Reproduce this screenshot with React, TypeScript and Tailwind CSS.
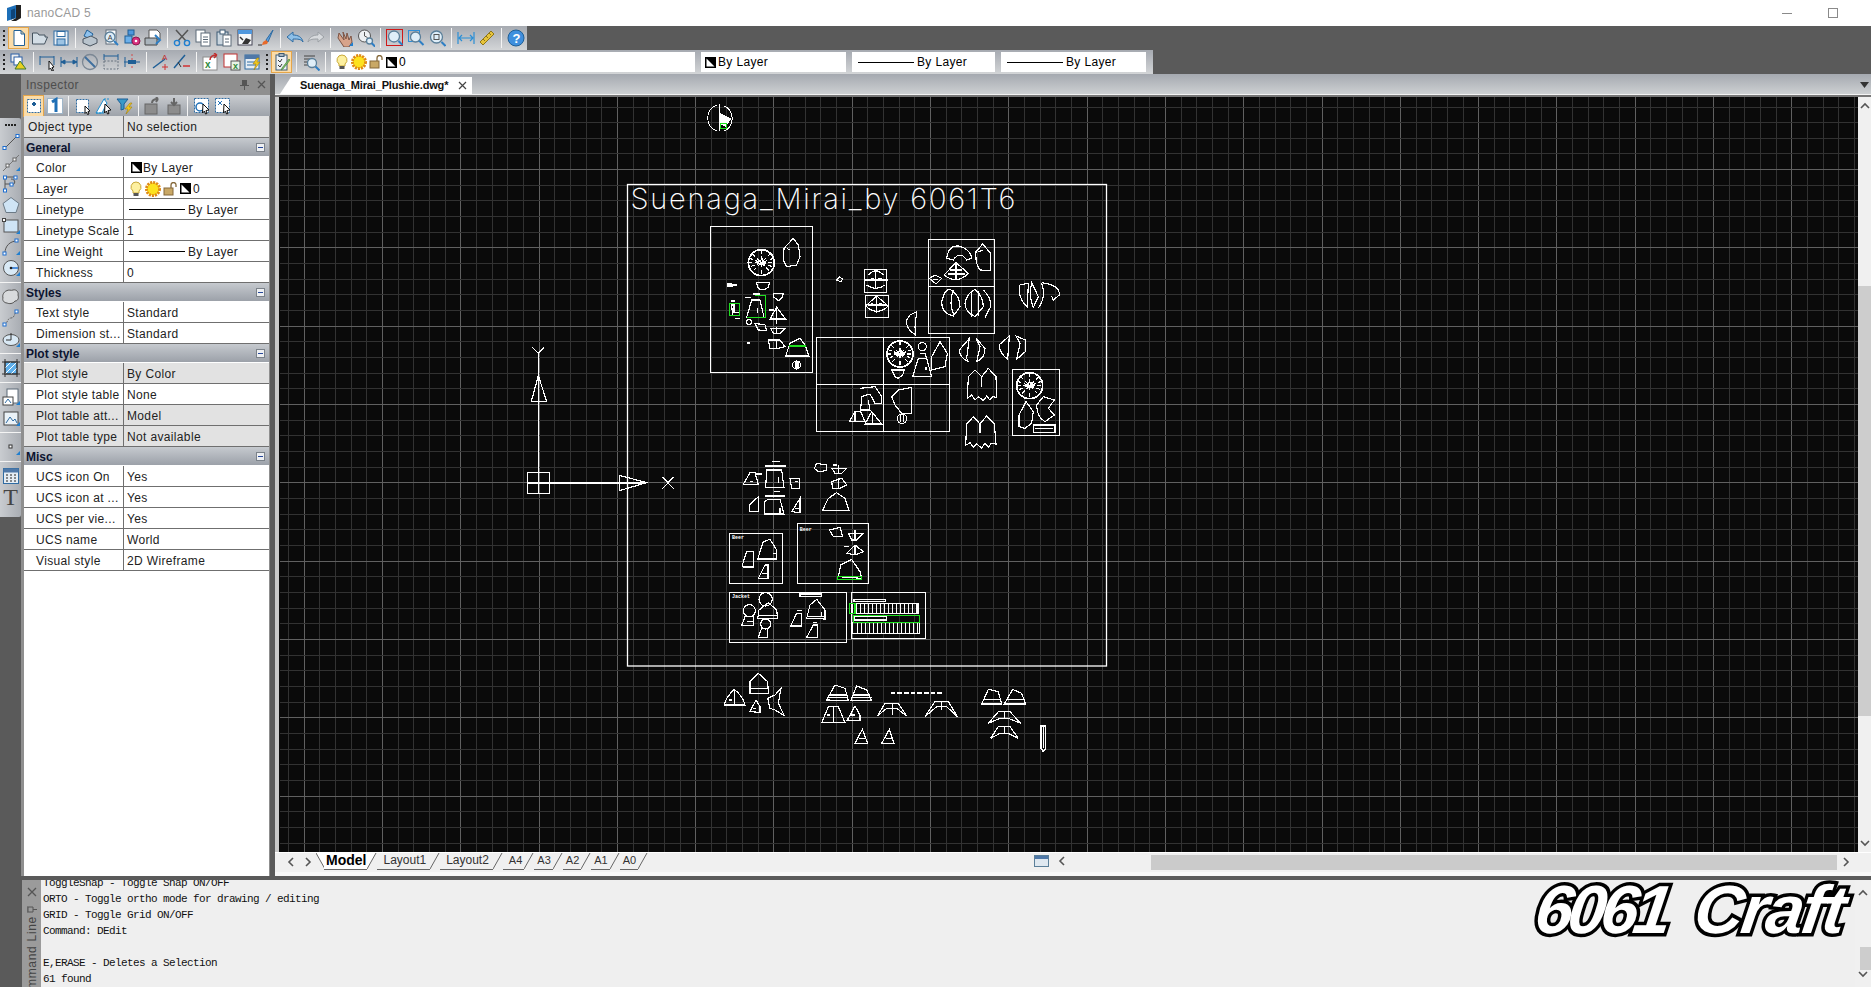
import React from "react";

const uiFont = "font-['Liberation_Sans',sans-serif]";

const Mag = ({ x = 8, y = 8, r = 5, c = "#2f7fc4" }: { x?: number; y?: number; r?: number; c?: string }) => (
  <g>
    <circle cx={x} cy={y} r={r} fill="#dfeef8" stroke="#5b7f99" strokeWidth="1.3" />
    <path d={`M${x + r - 1} ${y + r - 1} l4 4`} stroke={c} strokeWidth="2" />
  </g>
);

const Page = ({ x = 3, y = 2, w = 10, h = 13 }: { x?: number; y?: number; w?: number; h?: number }) => (
  <rect x={x} y={y} width={w} height={h} fill="#fff" stroke="#5d6b78" />
);

const icons: Record<string, React.ReactNode> = {
  new: <path d="M4 1.5h7l3.5 3.5v11.5H4z M11 1.5v3.5h3.5" fill="#fff" stroke="#1f5f96" />,
  open: <path d="M1.5 15V4h5l1.5 2h6v2h2.5l-3 7z" fill="#d3dde5" stroke="#44525e" />,
  save: (
    <g>
      <rect x="2" y="2" width="14" height="14" fill="#e8eef4" stroke="#2f6ca3" />
      <rect x="5" y="2.5" width="8" height="5" fill="#fff" stroke="#2f6ca3" />
      <rect x="5" y="10" width="8" height="6" fill="#9cc3e3" stroke="#2f6ca3" />
    </g>
  ),
  print: (
    <g>
      <path d="M6 1l6 4-3 5-6-3z" fill="#8fc2ee" stroke="#1f5f96" />
      <path d="M2 10l8-3 6 3v4l-7 3-7-3z" fill="#b9c4cd" stroke="#4a5560" />
    </g>
  ),
  preview: (
    <g>
      <Page x={4} y={1} w={10} h={14} />
      <Mag x={8} y={8} r={5} />
      <text x="5.8" y="11" fontSize="7" fill="#333">A</text>
    </g>
  ),
  publish: (
    <g>
      <rect x="5" y="1" width="6" height="5" fill="#4f97dd" stroke="#1f5f96" />
      <rect x="2" y="7" width="7" height="7" fill="#6cb0ea" stroke="#1f5f96" />
      <circle cx="13" cy="12" r="4" fill="#d8307e" stroke="#8d1a4e" />
      <circle cx="13" cy="12" r="1.3" fill="#fff" />
    </g>
  ),
  plot: (
    <g>
      <path d="M5 1h8l3 3v6H5z" fill="#fff" stroke="#555" />
      <path d="M1 9h12v7H1z" fill="#aab4bc" stroke="#444" />
      <path d="M11 6l5 5-4 4" fill="none" stroke="#2f7fc4" strokeWidth="2" />
    </g>
  ),
  cut: (
    <g fill="none">
      <path d="M3 1l10 11M15 1L5 12" stroke="#555" strokeWidth="1.5" />
      <circle cx="4" cy="14" r="2.6" stroke="#1f7fd0" strokeWidth="1.4" />
      <circle cx="14" cy="14" r="2.6" stroke="#1f7fd0" strokeWidth="1.4" />
    </g>
  ),
  copy: (
    <g>
      <Page x={2} y={1} w={9} h={12} />
      <Page x={7} y={4} w={9} h={13} />
      <path d="M9 8h5M9 10.500h5M9 13h5" stroke="#5d6b78" />
    </g>
  ),
  paste: (
    <g>
      <rect x="2" y="3" width="11" height="13" fill="#cbd6df" stroke="#3c5a74" />
      <rect x="5" y="1" width="5" height="4" fill="#fff" stroke="#3c5a74" />
      <Page x={8} y={6} w={8} h={11} />
      <path d="M10 10h4M10 13h4" stroke="#5d6b78" />
    </g>
  ),
  match: (
    <g>
      <rect x="2" y="1" width="14" height="15" fill="#f4f6f8" stroke="#445" />
      <rect x="2" y="1" width="14" height="4" fill="#4f97dd" />
      <path d="M6 15l4-6 5 2-3 4z" fill="#333" />
      <path d="M4 8l3 3" stroke="#333" strokeWidth="1.5" />
    </g>
  ),
  brush: (
    <g>
      <path d="M16 1L9 11l2 2z" fill="#5c9fe0" stroke="#2f6ca3" />
      <path d="M9 11l-3 2-1 3 5-1 1-2z" fill="#e86a2a" />
      <path d="M1 16h4" stroke="#333" />
    </g>
  ),
  undo: <path d="M1 8l6-5v3c5 0 9 2 10 7-2-3-5-3-10-3v3z" fill="#8ec0e8" stroke="#2f6ca3" />,
  redo: <path d="M17 8l-6-5v3C6 6 2 8 1 13c2-3 5-3 10-3v3z" fill="#d7dadd" stroke="#9ba0a5" />,
  hand: (
    <g>
      <path d="M3 4l5 7-1-8 3 7 1-6 2 7 2-4 1 6-3 5H8L2 9z" fill="#d7a38a" stroke="#7d5444" />
      <path d="M13 17l4-4v4z" fill="#1f7fd0" />
    </g>
  ),
  clockZoom: (
    <g>
      <circle cx="7.500" cy="7" r="6" fill="#eef1f3" stroke="#555" />
      <path d="M7.500 3v4l3 1.500" fill="none" stroke="#555" />
      <Mag x={12.500} y={12} r={3} />
    </g>
  ),
  zoomWin: (
    <g>
      <rect x=".5" y=".5" width="16" height="16" fill="none" stroke="#d01818" />
      <Mag x={8} y={7.500} r={5.500} />
    </g>
  ),
  zoomPrev: (
    <g>
      <rect x="1.500" y="1.500" width="11" height="11" fill="none" stroke="#2f8fd8" />
      <Mag x={8.500} y={8} r={5} />
    </g>
  ),
  zoomAll: (
    <g>
      <Mag x={8.500} y={8} r={6} />
      <rect x="6" y="5.500" width="5" height="5" fill="none" stroke="#555" />
    </g>
  ),
  dist: (
    <g stroke="#2b8fd6" fill="none" strokeWidth="1.200">
      <path d="M1 3v12M17 3v12M2 9h14M2 9l3-3M2 9l3 3M16 9l-3-3M16 9l-3 3" />
    </g>
  ),
  ruler: (
    <g>
      <path d="M2 13L13 2l3 3L5 16z" fill="#e6c33b" stroke="#8e7618" />
      <path d="M5 10l2 2M8 7l2 2M11 4l2 2" stroke="#8e7618" />
    </g>
  ),
  help: (
    <g>
      <circle cx="9" cy="9" r="8" fill="#3f8fde" stroke="#1f5f96" />
      <text x="5.500" y="13.500" fontSize="13" fontWeight="700" fill="#fff">?</text>
    </g>
  ),
  layers: (
    <g>
      <rect x="1" y="1" width="8" height="8" fill="#eee" stroke="#2a5fa5" />
      <rect x="4" y="4" width="8" height="8" fill="#fff" stroke="#2a5fa5" />
      <path d="M10 8l6 8H5z" fill="#e8d020" stroke="#3c7a30" />
    </g>
  ),
  dimPick: (
    <g fill="none" stroke="#1f5f96">
      <path d="M1 3v9M15 3v9M1 4h14" />
      <path d="M10 8l5 6-2 .5 1.500 3-1.500.5-1.500-3-1.500 1.500z" fill="#fff" stroke="#111" />
    </g>
  ),
  dimLine: <path d="M1 4v10M17 4v10M1 9h16M1 9l4-2v4zM17 9l-4-2v4z" fill="#1f5f96" stroke="#1f5f96" />,
  noSym: (
    <g fill="none" stroke="#7b8794" strokeWidth="1.300">
      <circle cx="9" cy="9" r="7.500" />
      <path d="M4 4l10 10" stroke="#3f6f9f" strokeWidth="2" />
    </g>
  ),
  dimDash: (
    <g fill="none" stroke="#6a7580">
      <path d="M2 1v6M16 1v6M2 3h14" stroke="#1f5f96" />
      <rect x="2" y="8" width="14" height="8" strokeDasharray="2 1.500" />
    </g>
  ),
  dimMid: (
    <g>
      <path d="M9 1v16" stroke="#d24b4b" strokeDasharray="2 2" />
      <path d="M1 9h16" stroke="#1f5f96" />
      <path d="M2 4v10" stroke="#1f5f96" />
      <path d="M5 7h8v4H5z" fill="#1f5f96" />
    </g>
  ),
  addA: (
    <g fill="none">
      <path d="M1 15L13 6" stroke="#1f5f96" strokeWidth="1.500" />
      <text x="10" y="7" fontSize="8" fill="#c03030" stroke="none">A</text>
      <path d="M10 14h6M13 11v6" stroke="#d03030" />
    </g>
  ),
  subA: (
    <g fill="none">
      <path d="M1 15L12 2" stroke="#1f5f96" strokeWidth="1.500" />
      <path d="M8 14L5 9" stroke="#333" />
      <path d="M10 13h7" stroke="#d03030" strokeWidth="1.500" />
    </g>
  ),
  xlsOut: (
    <g>
      <rect x="1" y="4" width="14" height="13" fill="#fff" stroke="#8c8c8c" />
      <text x="3" y="15" fontSize="10" fontWeight="700" fill="#2f8a3a">x</text>
      <path d="M8 7c0-4 3-5 7-5M15 2l-3-2M15 2l-3 3" fill="none" stroke="#c03030" strokeWidth="1.500" />
    </g>
  ),
  xlsIn: (
    <g>
      <rect x="1" y="1" width="13" height="13" fill="#fff" stroke="#c03030" />
      <rect x="8" y="8" width="9" height="9" fill="#e8f3e6" stroke="#555" />
      <text x="10" y="16" fontSize="9" fontWeight="700" fill="#2f8a3a">x</text>
    </g>
  ),
  tableBolt: (
    <g>
      <rect x="1" y="2" width="14" height="14" fill="#e7eef5" stroke="#2f6ca3" />
      <rect x="1" y="2" width="14" height="4" fill="#4f78a8" />
      <path d="M3 9h9M3 12h9" stroke="#2f6ca3" />
      <path d="M13 5l-4 6h3l-2 6 6-8h-3l2-4z" fill="#f2c81e" stroke="#a07f10" strokeWidth=".6" />
    </g>
  ),
  clip: (
    <g>
      <rect x="3" y="2" width="11" height="15" fill="#eef2f5" stroke="#3c5a74" />
      <rect x="6" y="0.500" width="5" height="3" fill="#aab4bc" stroke="#3c5a74" />
      <path d="M5 7l2 2 2-3M5 12l2 2 2-3" fill="none" stroke="#333" />
      <path d="M16 6l-7 9-1 2 2-1 7-9z" fill="#7cc06a" stroke="#3c7a30" strokeWidth=".6" />
    </g>
  ),
  findBolt: (
    <g>
      <path d="M2 3h11M2 6h9M2 9h6M2 12h4" stroke="#444" />
      <Mag x={10} y={10} r={4.500} />
    </g>
  ),
  select: (
    <g>
      <rect x="2.500" y="2.500" width="13" height="13" fill="#fff" stroke="#2f6ca3" strokeDasharray="2 1" />
      <path d="M7 7h4M9 5v4" stroke="#1f5f96" strokeWidth="2" />
    </g>
  ),
  one: (
    <g>
      <rect x="1.500" y="1.500" width="15" height="15" fill="#fff" stroke="#9fb6c9" />
      <path d="M6 5l4-2.500V15" fill="none" stroke="#1f6fb5" strokeWidth="3" />
    </g>
  ),
  quick: (
    <g>
      <rect x="2.500" y="2.500" width="12" height="13" fill="#fff" stroke="#2f6ca3" strokeDasharray="2 1" />
      <path d="M11 9l5 5-2 .5 1 2.500-1.500.5-1-2.500-1.500 1.500z" fill="#fff" stroke="#111" />
    </g>
  ),
  pick: (
    <g>
      <path d="M1 16L9 2l3 4-5 10z" fill="#fff" stroke="#1f8fd0" />
      <path d="M9 2h6M1 16h8" stroke="#1f8fd0" strokeDasharray="2 1" />
      <path d="M10 7l6 6-3 .5 1 3-1.500.5-1-3-2 2z" fill="#fff" stroke="#111" />
    </g>
  ),
  filter: (
    <g>
      <path d="M1 2h11L8 7v5L5 13V7z" fill="#3a9ac9" stroke="#1f5f96" />
      <path d="M14 6l-5 6h3l-2 5 6-7h-3l3-4z" fill="#f2c81e" stroke="#a07f10" strokeWidth=".6" />
    </g>
  ),
  grayOut: (
    <g>
      <rect x="1" y="7" width="12" height="10" fill="#8d8d8d" stroke="#666" />
      <path d="M8 6c0-3 3-4 6-4M14 2l-2-2M14 2l-2 3" fill="none" stroke="#666" strokeWidth="2" />
    </g>
  ),
  grayIn: (
    <g>
      <rect x="3" y="8" width="12" height="9" fill="#8d8d8d" stroke="#666" />
      <path d="M9 1v7M6 5l3 3 3-3" fill="none" stroke="#666" strokeWidth="2" />
    </g>
  ),
  selCirc: (
    <g>
      <rect x="1.500" y="1.500" width="14" height="14" fill="#fff" stroke="#2f6ca3" strokeDasharray="2 1" />
      <circle cx="7" cy="10" r="4" fill="none" stroke="#1f6fb5" strokeWidth="1.500" />
      <path d="M10 7l6 6-3 .5 1 3-1.500.5-1-3-2 2z" fill="#fff" stroke="#111" />
    </g>
  ),
  selX: (
    <g>
      <rect x="1.500" y="1.500" width="14" height="14" fill="#fff" stroke="#2f6ca3" strokeDasharray="2 1" />
      <path d="M4 4l4 4M8 4L4 8" stroke="#1f6fb5" />
      <path d="M10 7l6 6-3 .5 1 3-1.500.5-1-3-2 2z" fill="#fff" stroke="#111" />
    </g>
  ),
  line: (
    <g>
      <path d="M3 15L15 3" stroke="#555" />
      <rect x="1" y="13.500" width="3" height="3" fill="#fff" stroke="#1f6fd0" />
      <rect x="14" y="1.500" width="3" height="3" fill="#fff" stroke="#1f6fd0" />
    </g>
  ),
  xline: (
    <g>
      <path d="M1 17L17 1" stroke="#777" />
      <rect x="4" y="10" width="3" height="3" fill="#fff" stroke="#666" />
      <rect x="11" y="4" width="3" height="3" fill="#fff" stroke="#666" />
      <path d="M14 17l4-4v4z" fill="#1f7fd0" />
    </g>
  ),
  poly: (
    <g fill="#fff" stroke="#1f6fd0">
      <path d="M3 2h10M3 2v14M3 9h6M9 4c5 0 5 6 0 6" fill="none" stroke="#555" />
      <rect x="1.500" y="1" width="3" height="3" />
      <rect x="12" y="1" width="3" height="3" />
      <rect x="1.500" y="14" width="3" height="3" />
      <rect x="8" y="8" width="3" height="3" />
    </g>
  ),
  pentagon: <path d="M9 1.500l8 6-3 9H4l-3-9z" fill="#cfe4f5" stroke="#6c7a86" />,
  rect: (
    <g>
      <rect x="2" y="3" width="14" height="12" fill="#cfe4f5" stroke="#555" />
      <rect x=".5" y="1.500" width="3" height="3" fill="#fff" stroke="#444" />
      <path d="M14 17l4-4v4z" fill="#1f7fd0" />
    </g>
  ),
  arc: (
    <g>
      <path d="M3 15C3 8 8 3 15 3" fill="none" stroke="#555" />
      <rect x="1" y="14" width="3" height="3" fill="#fff" stroke="#1f6fd0" />
      <rect x="13" y="1" width="3" height="3" fill="#fff" stroke="#1f6fd0" />
      <path d="M14 17l4-4v4z" fill="#1f7fd0" />
    </g>
  ),
  circle: (
    <g>
      <circle cx="9" cy="9" r="7.500" fill="#d9e9f5" stroke="#555" />
      <path d="M9 9h7" stroke="#1f6fd0" strokeWidth="1.500" />
      <circle cx="9" cy="9" r="1.300" fill="#222" />
      <path d="M14 17l4-4v4z" fill="#1f7fd0" />
    </g>
  ),
  cloud: <path d="M4 3c3-2 5 0 7-1 3-1 6 2 5 5 1 3 0 6-3 6-2 3-6 3-8 2-3 0-5-3-4-5C0 7 2 4 4 3z" fill="#d8dadc" stroke="#555" />,
  spline: (
    <g>
      <path d="M2 15c4 0 3-6 7-6s3-5 6-7" fill="none" stroke="#666" strokeDasharray="2 1" />
      <rect x="1" y="14" width="3" height="3" fill="#fff" stroke="#1f6fd0" />
      <rect x="13" y="1" width="3" height="3" fill="#fff" stroke="#1f6fd0" />
    </g>
  ),
  ellipse: (
    <g>
      <ellipse cx="9" cy="10" rx="8" ry="5.500" fill="#d9e9f5" stroke="#555" />
      <path d="M9 10h-5M9 3v7" stroke="#333" />
      <path d="M14 17l4-4v4z" fill="#1f7fd0" />
    </g>
  ),
  hatch: (
    <g>
      <rect x="3" y="3" width="12" height="12" fill="#5fb0ec" stroke="#333" />
      <path d="M3 9l6-6M3 15L15 3M9 15l6-6" stroke="#fff" />
      <path d="M0 3h18M0 15h18M3 0v18M15 0v18" stroke="#333" />
    </g>
  ),
  block: (
    <g>
      <Page x={5} y={1} w={11} h={14} />
      <rect x="1" y="9" width="10" height="8" fill="#fff" stroke="#444" />
      <path d="M3 15l3-4 3 4" fill="none" stroke="#2f6ca3" />
      <path d="M14 17l4-4v4z" fill="#1f7fd0" />
    </g>
  ),
  image: (
    <g>
      <rect x="2" y="3" width="14" height="13" fill="#eaf2f8" stroke="#444" />
      <path d="M4 14l4-6 3 4 2-2 2 4" fill="none" stroke="#2f6ca3" />
      <path d="M14 17l4-4v4z" fill="#1f7fd0" />
    </g>
  ),
  point: (
    <g>
      <rect x="7" y="7" width="3" height="3" fill="#fff" stroke="#333" />
      <path d="M14 17l4-4v4z" fill="#1f7fd0" />
    </g>
  ),
  table: (
    <g>
      <rect x="1.500" y="1.500" width="15" height="15" fill="#e5edf4" stroke="#2f6ca3" />
      <rect x="1.500" y="1.500" width="15" height="4" fill="#4f78a8" />
      <path d="M4 8h2M8 8h2M12 8h2M4 11h2M8 11h2M12 11h2M4 14h2M8 14h2M12 14h2" stroke="#222" />
    </g>
  ),
};

const Icon = ({ name, size = 18 }: { name: string; size?: number }) => (
  <svg width={size} height={size} viewBox="0 0 18 18" className="shrink-0">
    {icons[name]}
  </svg>
);

const ToolBtn = ({ name, active }: { name: string; active?: boolean }) => (
  <div
    className={`w-[21px] h-[22px] flex items-center justify-center shrink-0 ${
      active ? "bg-[#fbdca8] border border-[#e5a64a]" : ""
    }`}
  >
    <Icon name={name} />
  </div>
);

const Sep = ({ w = "w-[8px]" }: { w?: string }) => (
  <div className={`${w} h-[20px] flex justify-center shrink-0`}>
    <div className="w-[1px] h-full bg-[#f4f4f4]" />
  </div>
);

const Grip = () => (
  <div className="w-[8px] h-[20px] flex flex-col justify-between py-[2px] items-center shrink-0">
    <div className="w-[2px] h-[2px] bg-[#222]" />
    <div className="w-[2px] h-[2px] bg-[#222]" />
    <div className="w-[2px] h-[2px] bg-[#222]" />
    <div className="w-[2px] h-[2px] bg-[#222]" />
  </div>
);

const Swatch = () => (
  <svg width="11" height="11" viewBox="0 0 11 11" className="shrink-0">
    <rect width="11" height="11" fill="#000" />
    <path d="M1.500 1.500L9.500 9.500V1.500z" fill="#fff" transform="rotate(180 5.500 5.500)" />
  </svg>
);

const LayerGlyphs = () => (
  <span className="flex items-center gap-[2px]">
    <svg width="14" height="16" viewBox="0 0 14 16" className="shrink-0">
      <path d="M7 1a5 5 0 0 1 3 9v2H4v-2a5 5 0 0 1 3-9z" fill="#fdf0a0" stroke="#c9a93a" />
      <rect x="4.500" y="12" width="5" height="3" fill="#555" />
    </svg>
    <svg width="16" height="16" viewBox="0 0 16 16" className="shrink-0">
      <circle cx="8" cy="8" r="6.500" fill="#fde21f" stroke="#e08a16" strokeWidth="3" strokeDasharray="2 1" />
      <circle cx="8" cy="8" r="5" fill="#fde21f" />
    </svg>
    <svg width="15" height="14" viewBox="0 0 15 14" className="shrink-0">
      <rect x="1" y="6" width="9" height="7" fill="#c9a866" stroke="#85683a" />
      <path d="M8 6V3a2.500 2.500 0 0 1 5 0v2" fill="none" stroke="#85683a" strokeWidth="1.300" />
    </svg>
    <Swatch />
  </span>
);

const LinePreview = () => <span className="w-[56px] h-[1px] bg-black shrink-0" />;

type Row = { name: string; value: React.ReactNode; gray?: boolean };

const sections: { title: string; rows: Row[] }[] = [
  {
    title: "General",
    rows: [
      { name: "Color", value: <span className="flex items-center gap-[1px] pl-[4px]"><Swatch /><span>By Layer</span></span> },
      { name: "Layer", value: <span className="flex items-center gap-[2px] pl-[2px]"><LayerGlyphs /><span>0</span></span> },
      { name: "Linetype", value: <span className="flex items-center gap-[3px] pl-[2px]"><LinePreview /><span>By Layer</span></span> },
      { name: "Linetype Scale", value: "1" },
      { name: "Line Weight", value: <span className="flex items-center gap-[3px] pl-[2px]"><LinePreview /><span>By Layer</span></span> },
      { name: "Thickness", value: "0" },
    ],
  },
  {
    title: "Styles",
    rows: [
      { name: "Text style", value: "Standard" },
      { name: "Dimension st...", value: "Standard" },
    ],
  },
  {
    title: "Plot style",
    rows: [
      { name: "Plot style", value: "By Color", gray: true },
      { name: "Plot style table", value: "None" },
      { name: "Plot table att...", value: "Model", gray: true },
      { name: "Plot table type", value: "Not available", gray: true },
    ],
  },
  {
    title: "Misc",
    rows: [
      { name: "UCS icon On", value: "Yes" },
      { name: "UCS icon at ...", value: "Yes" },
      { name: "UCS per vie...", value: "Yes" },
      { name: "UCS name", value: "World" },
      { name: "Visual style", value: "2D Wireframe" },
    ],
  },
];

const PropRow = ({ row }: { row: Row }) => (
  <div className={`h-[21px] flex border-b border-[#6f6f6f] text-[12px] tracking-[0.35px] text-[#222] ${row.gray ? "bg-[#e2e2e2]" : "bg-white"}`}>
    <div className="w-[100px] pl-[12px] pt-[1px] border-r border-[#6f6f6f] flex items-center whitespace-nowrap overflow-hidden shrink-0">{row.name}</div>
    <div className="flex-1 pl-[3px] pt-[1px] flex items-center whitespace-nowrap">{row.value}</div>
  </div>
);

const Inspector = () => (
  <div className="w-[249px] flex flex-col shrink-0 bg-[#8f8f8f] border-l-[3px] border-r-[1px] border-[#8f8f8f]">
    <div className="h-[21px] flex items-center justify-between text-[12px] text-[#4d4d4d] tracking-[0.4px] pl-[2px] pr-[3px]">
      <span>Inspector</span>
      <span className="flex items-center gap-[8px] text-[#4a4a4a]">
        <svg width="9" height="11" viewBox="0 0 9 11"><path d="M2 1h5v5h2v1H5v4H4V7H0V6h2z" fill="#555" /></svg>
        <svg width="9" height="9" viewBox="0 0 9 9"><path d="M1 1l7 7M8 1L1 8" stroke="#555" strokeWidth="1.300" /></svg>
      </span>
    </div>
    <div className="h-[21px] flex items-center bg-linear-to-b from-[#c9ccd0] to-[#9ea3aa] -mx-[1px]">
      <ToolBtn name="select" active />
      <ToolBtn name="one" />
      <Sep w="w-[7px]" />
      <ToolBtn name="quick" />
      <ToolBtn name="pick" />
      <ToolBtn name="filter" />
      <Sep w="w-[7px]" />
      <ToolBtn name="grayOut" />
      <ToolBtn name="grayIn" />
      <Sep w="w-[7px]" />
      <ToolBtn name="selCirc" />
      <ToolBtn name="selX" />
    </div>
    <div className="flex-1 bg-white">
      <div className="h-[22px] flex border-b border-[#6f6f6f] bg-[#e2e2e2] text-[12px] tracking-[0.35px] text-[#222]">
        <div className="w-[100px] pl-[4px] pt-[1px] border-r border-[#6f6f6f] flex items-center shrink-0">Object type</div>
        <div className="pl-[3px] pt-[1px] flex items-center">No selection</div>
      </div>
      {sections.map((s) => (
        <div key={s.title}>
          <div className="h-[19px] flex items-center justify-between pl-[2px] pr-[4px] pt-[1px] bg-linear-to-b from-[#c6cacf] to-[#9ca1a9] border-b border-white text-[12px] font-bold text-[#0c1430]">
            <span>{s.title}</span>
            <span className="w-[9px] h-[9px] bg-[#eef0f3] border border-[#7b828a] flex items-center justify-center">
              <span className="w-[5px] h-[1px] bg-[#27489a]" />
            </span>
          </div>
          {s.rows.map((r) => (
            <PropRow key={r.name} row={r} />
          ))}
        </div>
      ))}
    </div>
  </div>
);

const leftTools: (string | null)[] = [
  "line", "xline", "poly", "pentagon", "rect", "arc", "circle", null,
  "cloud", "spline", "ellipse", null, "hatch", null, "block", "image", null, "point", null, "table",
];

const LeftToolbar = () => (
  <div className="w-[21px] h-[399px] mt-[44px] shrink-0 flex flex-col items-center bg-linear-to-r from-[#c9ccd0] to-[#a9adb3] rounded-r-[2px]">
    <div className="flex gap-[1px] h-[13px] items-center shrink-0">
      <div className="w-[2px] h-[2px] bg-[#222]" />
      <div className="w-[2px] h-[2px] bg-[#222]" />
      <div className="w-[2px] h-[2px] bg-[#222]" />
      <div className="w-[2px] h-[2px] bg-[#222]" />
    </div>
    {leftTools.map((t, i) =>
      t ? (
        <div key={i} className="h-[21px] w-full flex items-center justify-center shrink-0">
          <Icon name={t} />
        </div>
      ) : (
        <div key={i} className="h-[1px] w-full bg-[#f4f4f4] my-[3.5px] shrink-0" />
      ),
    )}
    <div className="h-[21px] w-full flex items-center justify-center shrink-0 font-['Liberation_Serif',serif] text-[24px] text-[#444]">T</div>
  </div>
);

const Wheel = ({ x, y, r = 39 }: { x: number; y: number; r?: number }) => {
  const spokes = [0, 45, 90, 135, 20, 160].map((a) => {
    const c = Math.cos((a * Math.PI) / 180) * r;
    const s = Math.sin((a * Math.PI) / 180) * r;
    return `M${x - c} ${y - s}L${x + c} ${y + s}`;
  });
  return (
    <g>
      <circle cx={x} cy={y} r={r} strokeWidth="5" />
      <path d={spokes.join("")} strokeDasharray="12 8" />
      <path d={`M${x - 12} ${y + 4}l8-10 4 14 4-16 4 14 6-8`} strokeWidth="4" />
    </g>
  );
};

const sheetA = [
  "M492 235L520 205L535 225L540 260L530 285L500 290L490 270Z M500 235L510 240",
  "M410 338H448L445 352L435 358L420 358L412 350Z",
  "M395 390H420L432 442H380Z M412 415V430 M375 382H392 M400 372H420",
  "M462 370H490L485 385L475 392L460 380Z",
  "M470 412L497 447H450Z M470 412V462 M448 420H462",
  "M405 460L435 465L440 482L415 480Z",
  "M452 475H495L480 490H460Z M470 470V492",
  "M445 510H480L495 530L475 535L450 535Z M470 510V535",
  "M497 558L510 520L540 505L555 525L567 558Z",
  "M518 585a12 12 0 1 0 24 0a12 12 0 1 0 -24 0 M528 575V595 M534 575V595",
  "M380 456a7 7 0 1 0 14 0a7 7 0 1 0 -14 0",
  "M335 405H342V428H358V437H338Z M332 393H345 M345 445H360",
  "M322 345H352 M322 340H335 M380 519H390 M322 350H340",
  "M650 330L658 320L668 328L662 335Z",
  "M735 330H805 M767 300V355 M740 345Q767 365 795 345 M752 327h10 M775 327h10 M745 315Q767 290 790 315",
  "M737 408L770 378L805 408Q770 440 737 408 M770 378V430 M745 405H800 M752 400h8 M778 400h8",
  "M980 265Q985 225 1015 228Q1050 235 1055 265L1040 270Q1020 240 1000 270Z",
  "M1068 245L1088 222L1112 250V302L1080 300Q1065 280 1068 245Z M1075 245L1090 240",
  "M972 315L1008 278L1045 310Q1010 345 972 315 M1008 278V330 M985 312H1035 M990 300H1025",
  "M928 325L945 315L965 325L948 342Z M938 328H955",
  "M965 395Q975 355 990 358Q1020 375 1020 410L1000 438Q965 430 965 395Z M1000 360Q985 400 1002 436",
  "M1035 400Q1040 370 1065 358Q1090 380 1090 410L1065 440Q1035 425 1035 400Z M1055 362V440 M1075 362V438",
  "M1090 360Q1115 385 1112 410L1095 442",
  "M1200 345Q1190 380 1222 412L1225 340Z M1235 338Q1225 380 1240 412L1255 380Z M1265 338Q1280 380 1255 415 M1265 338Q1320 345 1318 375L1300 390L1295 378",
  "M870 435L890 425L885 470L887 495Q855 475 860 450Z",
  "M895 565H920L935 620H878Z M900 550H915L920 565H895 M895 530a12 12 0 1 0 24 0a12 12 0 1 0 -24 0 M918 590V600",
  "M935 560L960 515L982 550L975 590L935 600Z",
  "M815 600H853L848 615L835 625L825 620Z",
  "M720 655L765 650L785 680V700H765L750 672L725 680L722 720L750 720L745 690",
  "M688 755L705 725L722 725L735 755Z M705 725V755",
  "M735 762L755 725L785 762Z M758 725V762",
  "M815 680L835 660L875 652V730H845L825 705Z",
  "M832 746a14 14 0 1 0 28 0a14 14 0 1 0 -28 0 M842 736V756 M850 736V756",
  "M1018 540L1048 505L1040 565L1045 575Q1020 565 1018 540Z",
  "M1068 505L1095 535Q1095 565 1070 575L1080 530Z",
  "M1137 525L1168 498L1163 568Q1140 550 1137 525Z",
  "M1188 498L1216 510V545L1190 568L1200 520Z",
  "M1045 620L1065 600L1085 620L1105 595L1128 620L1130 682L1118 680L1110 690L1100 678L1090 692L1075 680L1065 690L1055 675L1042 685Z M1085 620V650",
  "M1040 762L1060 740L1080 762L1100 738L1123 762L1128 822L1113 820L1105 832L1095 820L1085 834L1070 822L1060 832L1050 818L1037 826Z M1080 762V790",
  "M1197 735L1218 695L1240 725L1235 760L1215 775L1197 770Z",
  "M1250 705L1270 680L1303 690L1285 715L1303 735L1275 755Q1250 740 1250 705Z",
  "M1240 765H1305V787H1240Z M1245 775H1300",
];

const sheetB = [
  "M200 90H245L252 143H197Z M235 110V130 M195 78H258 M215 65H240",
  "M130 133L150 98H165L175 133Z M150 125H160 M165 102H185",
  "M270 115H298V145H275Z M285 125H295",
  "M148 215V195L175 170V215Z",
  "M193 222V185L205 178H240L252 222Z M195 168H255 M222 155H240 M240 205V220",
  "M275 215L300 175V218Z M285 205H300",
  "M343 85L350 70L380 75L378 92L355 95Z",
  "M396 85H440L425 100H405Z M415 75V100 M400 75H412",
  "M395 125L425 115L440 135L420 145H398Z M415 115V145",
  "M367 212L385 175L410 158L435 175L447 212Z",
  "M173 357L190 305L210 298L230 330V357Z M220 340H230",
  "M126 378L140 335H160V381H130Z",
  "M175 415L195 375H204V415Z M185 400H204",
  "M388 270L420 262L428 290L400 290Z",
  "M445 280H490L470 300H455Z M465 270V300",
  "M440 340L465 315L490 335L465 345Z M465 315V345 M432 320H448",
  "M415 410L422 375L455 358L480 395L485 415Z",
  "M217 478a20 20 0 1 0 -40 0a20 20 0 1 0 40 0 M166 512a18 18 0 1 0 -36 0a18 18 0 1 0 36 0 M212 552a15 15 0 1 0 -30 0a15 15 0 1 0 30 0",
  "M173 535L177 510L205 488L230 510L233 535Z M173 527H233",
  "M125 557L135 530H160V557Z M140 545H160",
  "M175 592L185 565H203V592Z",
  "M272 558L290 520H305V558Z M290 512H305",
  "M320 535L330 495L350 478L375 510V537Z M320 530H378 M365 515V530",
  "M300 462H365V470H300Z",
  "M320 592L340 555H352V592Z M340 548H352",
  "M462 478H557V485H462Z M458 490H654V521H458Z M462 530H560V540H462Z M458 548H659V581H458Z",
  "M73 795Q75 775 103 748Q130 770 135 795Z M103 748V795 M88 780H95",
  "M150 760V725L175 700L203 725L205 760Z M150 745H205",
  "M150 815L168 780L180 800V817Z M160 805H168",
  "M203 775L225 765L243 745L235 790L253 827L225 810L210 805Z",
  "M380 780L405 735L435 745L445 782Z M390 765H440 M382 772H445",
  "M452 782L470 738L500 750L515 782Z M460 765H510 M455 772H515",
  "M365 848L385 800H415L435 848Z M400 800V848 M380 825H390",
  "M442 840L465 798L480 825V842Z M450 825H465",
  "M465 910L487 868L503 910Z M478 895H495",
  "M545 910L568 868L582 910Z M558 895H575",
  "M532 828L555 790H595L620 828L590 805H560Z M578 790V825",
  "M675 830L705 785H745L772 830L740 800H710Z M725 785V810",
  "M845 792L865 748L895 755L905 792Z M850 778H900",
  "M913 792L938 748L965 760L977 792Z M918 778H975",
  "M865 850L895 815H930L962 850L925 835H900Z M913 815V835",
  "M872 895L895 860H930L955 895L925 880H900Z M913 860V880",
  "M1023 858H1037V925L1030 935L1023 925Z M1030 858V925",
];

const stripes = Array.from({ length: 16 }, (_, i) => 470 + i * 12);

const Drawing = () => {
  const xs = Array.from({ length: 102 }, (_, i) => 288 + i * 15.66);
  const ys = Array.from({ length: 50 }, (_, i) => 106.5 + i * 15.66);
  const isMajorX = (i: number) => i % 5 === 1;
  const isMajorY = (i: number) => i % 5 === 4;
  return (
    <svg viewBox="280 97 1578 755" className="absolute inset-0 w-full h-full" fill="none" shapeRendering="crispEdges">
      {xs.map((x, i) => (
        <path key={x} d={`M${Math.round(x) + 0.5} 97V852`} stroke={isMajorX(i) ? "#606060" : "#323232"} />
      ))}
      {ys.map((y, i) => (
        <path key={y} d={`M280 ${Math.round(y) + 0.5}H1858`} stroke={isMajorY(i) ? "#606060" : "#323232"} />
      ))}

      <g stroke="#fff" shapeRendering="auto">
        <rect x="628" y="184.500" width="479" height="481.500" strokeWidth="1.300" />
        <text x="631" y="209" fill="#fff" stroke="none" fontSize="29" fontFamily="Inter, sans-serif" fontWeight="200" textLength="385" lengthAdjust="spacing">Suenaga_Mirai_by 6061T6</text>
      </g>

      <g transform="translate(620.500 170) scale(.33333)" stroke="#fff" strokeWidth="3.500">
        <rect x="271" y="170" width="307" height="437" strokeWidth="4" />
        <path d="M925 208H1124V490H925Z M925 349H1124" strokeWidth="4" />
        <path d="M589 502H989V784H589Z M790 502V784 M589 643H989" strokeWidth="4" />
        <rect x="733" y="298" width="67" height="69" />
        <rect x="736" y="376" width="70" height="66" />
        <rect x="1177" y="598" width="142" height="198" strokeWidth="4" />
        <Wheel x={424} y={278} />
        <Wheel x={840} y={552} />
        <Wheel x={1229} y={647} />
        {sheetA.map((d) => (
          <path key={d} d={d} />
        ))}
        <g stroke="#1fe01f">
          <rect x="328" y="400" width="30" height="37" />
          <path d="M405 376H437V442H382" />
          <path d="M508 528H558" strokeWidth="4" />
        </g>
      </g>

      <g transform="translate(700.500 440) scale(.33333)" stroke="#fff" strokeWidth="3.500">
        <rect x="88" y="280" width="160" height="151" strokeWidth="4" />
        <rect x="292" y="250" width="214" height="181" strokeWidth="4" />
        <rect x="88" y="458" width="352" height="149" strokeWidth="4" />
        <rect x="454" y="458" width="223" height="138" strokeWidth="4" />
        {sheetB.map((d) => (
          <path key={d} d={d} />
        ))}
        <path d={stripes.map((x) => `M${x} 490V521M${x + 3} 548V581`).join("")} />
        <path d="M572 760H728" strokeDasharray="14 6" strokeWidth="5" />
        <g fill="#fff" stroke="none" fontSize="15" fontWeight="700" fontFamily="'Liberation Mono', monospace" shapeRendering="auto">
          <text x="96" y="297">Beer</text>
          <text x="299" y="273">Beer</text>
          <text x="96" y="473">Jacket</text>
        </g>
        <g stroke="#1fe01f">
          <rect x="412" y="410" width="73" height="9" />
          <rect x="448" y="490" width="17" height="30" />
          <rect x="460" y="526" width="199" height="22" />
        </g>
      </g>

      <g transform="translate(500.500 320) scale(.33333)" stroke="#fff" strokeWidth="3.500">
        <rect x="82" y="457" width="67" height="64" />
        <path d="M115 117V521 M82 489H437" />
        <path d="M115 167L140 244H94Z M358 466V512L440 488Z" />
        <path d="M487 471L521 506M521 471L487 506 M97 82L115 100L132 82M115 100V117" />
      </g>

      <g stroke="#fff">
        <path d="M717 105A14 14 0 0 0 717 131 M725 106A14 14 0 0 1 725 131 M720 104V131" />
        <path d="M721 114L731 119L726 126L721 124Z" fill="#fff" />
        <rect x="721" y="123" width="6" height="5" stroke="#1fe01f" />
      </g>
    </svg>
  );
};

const Slash = ({ back, active }: { back?: boolean; active?: boolean }) => (
  <svg width="10" height="17" viewBox="0 0 10 17" className="shrink-0">
    <path d={back ? "M0 0L9 16.500V0z" : "M0 16.500L9 0H0z"} fill={active ? "#fff" : "none"} />
    <path d={back ? "M0 0L9 16" : "M0 16L9 0"} stroke="#666" fill="none" />
  </svg>
);

const layoutTabs = [
  { name: "Layout1", pad: "pl-[6px] pr-[4px] text-[12px]" },
  { name: "Layout2", pad: "pl-[6px] pr-[4px] text-[12px]" },
  { name: "A4", pad: "pl-[6px] pr-[2px] text-[11px]" },
  { name: "A3", pad: "pl-[3px] pr-[2px] text-[11px]" },
  { name: "A2", pad: "pl-[3px] pr-[2px] text-[11px]" },
  { name: "A1", pad: "pl-[3px] pr-[2px] text-[11px]" },
  { name: "A0", pad: "pl-[3px] pr-[2px] text-[11px]" },
];

const Chevron = ({ dir }: { dir: "l" | "r" | "u" | "d" }) => {
  const d = { l: "M6 1L2 5l4 4", r: "M3 1l4 4-4 4", u: "M1 7l4-4 4 4", d: "M1 3l4 4 4-4" }[dir];
  return (
    <svg width="10" height="10" viewBox="0 0 10 10" className="shrink-0">
      <path d={d} stroke="#555" strokeWidth="1.600" fill="none" />
    </svg>
  );
};

const DrawingFrame = () => (
  <div className="flex-1 flex flex-col min-w-0 ml-[5px]">
    <div className="h-[20px] flex items-end bg-linear-to-b from-[#a5a9b0] to-[#cdd0d2] relative">
      <svg width="11" height="17" viewBox="0 0 11 17" className="shrink-0 ml-[5px]">
        <path d="M0 17L11 0V17z" fill="#fff" />
      </svg>
      <div className="w-[181px] h-[17px] bg-white flex items-center pl-[9px] text-[11px] font-semibold tracking-[-0.15px] text-[#111] justify-between pr-[5px]">
        <span>Suenaga_Mirai_Plushie.dwg*</span>
        <svg width="9" height="9" viewBox="0 0 9 9"><path d="M1 1l7 7M8 1L1 8" stroke="#444" strokeWidth="1.200" /></svg>
      </div>
      <svg width="9" height="6" viewBox="0 0 9 6" className="absolute right-[2px] top-[8px]"><path d="M0 0h9L4.500 6z" fill="#333" /></svg>
    </div>
    <div className="h-[1px] bg-[#f4f4f4]" />
    <div className="h-[2px] bg-[#777]" />
    <div className="flex-1 flex min-h-0 pl-[1px] bg-[#c8c8c8]">
      <div className="flex-1 relative bg-[#0a0a0a] min-w-0 overflow-hidden border-l-[3px] border-[#c9c9c9]">
        <Drawing />
      </div>
      <div className="w-[13px] bg-[#f0f0f0] flex flex-col items-center justify-between py-[4px] relative">
        <Chevron dir="u" />
        <div className="w-full h-[430px] bg-[#cdcdcd] absolute top-[189px]" />
        <Chevron dir="d" />
      </div>
    </div>
    <div className="h-[1px] bg-white" />
    <div className="h-[19px] flex items-start bg-[#f0f0f0] text-[#333]">
      <div className="w-[41px] h-[17px] pl-[12px] flex items-center gap-[6px] shrink-0">
        <Chevron dir="l" />
        <Chevron dir="r" />
      </div>
      <Slash back active />
      <span className="h-[17px] -ml-[2px] pl-[2px] pr-[1px] bg-white border-b border-[#666] font-bold text-[14px] leading-[15px] text-black">Model</span>
      <Slash active />
      {layoutTabs.map((t) => (
        <React.Fragment key={t.name}>
          <span className={`h-[17px] leading-[15px] border-b border-[#666] ${t.pad}`}>{t.name}</span>
          <Slash />
        </React.Fragment>
      ))}
      <div className="ml-[386px] mt-[2px] w-[15px] h-[12px] bg-[#dfe8f0] border border-[#5b7f99] shrink-0">
        <div className="h-[3px] bg-[#4f78a8]" />
      </div>
      <div className="ml-[9px] mt-[3px] shrink-0">
        <Chevron dir="l" />
      </div>
      <div className="w-[83px] shrink-0" />
      <div className="flex-1 h-[15px] mt-[2px] bg-[#cbcbcb]" />
      <div className="w-[34px] pl-[4px] mt-[4px] shrink-0">
        <Chevron dir="r" />
      </div>
    </div>
    <div className="h-[4px] bg-[#f7f7f7]" />
  </div>
);

const commandLines = [
  "ToggleSnap - Toggle Snap ON/OFF",
  "ORTO - Toggle ortho mode for drawing / editing",
  "GRID - Toggle Grid ON/OFF",
  "Command: DEdit",
  " ",
  "E,ERASE - Deletes a Selection",
  "61 found",
];

const CommandPanel = () => (
  <div className="h-[107px] ml-[22px] mt-[4px] flex relative overflow-hidden">
    <div className="w-[19px] bg-[#9b9b9b] flex flex-col items-center overflow-hidden shrink-0 text-[#444]">
      <svg width="10" height="10" viewBox="0 0 10 10" className="mt-[7px] shrink-0"><path d="M1 1l8 8M9 1L1 9" stroke="#555" strokeWidth="1.300" /></svg>
      <svg width="10" height="9" viewBox="0 0 10 9" className="mt-[8px] shrink-0"><path d="M1 2h5v5H1zM6 4.500h4M0 1v7" stroke="#555" fill="none" /></svg>
      <span className="mt-[2px] shrink-0 text-[12px] tracking-[0.7px] whitespace-nowrap [writing-mode:vertical-rl] rotate-180">Command Line</span>
    </div>
    <div className="flex-1 bg-[#efefef] overflow-hidden pl-[2px] -mt-[6px] font-['Liberation_Mono',monospace] text-[11px] tracking-[-0.6px] leading-[16px] text-[#111]">
      <div className="mt-[1px]">
        {commandLines.map((l, i) => (
          <div key={i} className="h-[16px] whitespace-pre">{l}</div>
        ))}
      </div>
    </div>
    <div className="w-[16px] bg-[#f0f0f0] flex flex-col items-center justify-between py-[8px] relative shrink-0">
      <Chevron dir="u" />
      <div className="absolute top-[67px] left-[5px] w-[11px] h-[23px] bg-[#cdcdcd]" />
      <Chevron dir="d" />
    </div>
  </div>
);

export default function App() {
  return (
    <div className={`w-[1871px] h-[987px] bg-[#5a5a5a] overflow-hidden flex flex-col relative ${uiFont}`}>
      <div className="h-[26px] bg-white flex items-center pl-[7px] shrink-0 text-[12px] text-[#9a9a9a] tracking-[0.2px]">
        <svg width="14" height="16" viewBox="0 0 14 16" className="shrink-0">
          <path d="M0 3L9 0V13L0 16z" fill="#1d6fb8" />
          <path d="M9 0h5v13l-5 3H4l5-3z" fill="#222" />
          <path d="M4 5l4-1.500V13L4 14.500z" fill="#0e4478" />
        </svg>
        <span className="ml-[6px]">nanoCAD 5</span>
        <span className="ml-auto w-[10px] h-[1px] bg-[#8a8a8a] mr-[36px]" />
        <span className="w-[10px] h-[10px] border border-[#8a8a8a] mr-[33px]" />
      </div>

      <div className="h-[24px] w-[527px] flex items-center shrink-0 bg-linear-to-b from-[#a6aab1] to-[#d3d5d7]">
        <Grip />
        <ToolBtn name="new" active />
        <ToolBtn name="open" />
        <ToolBtn name="save" />
        <Sep />
        <ToolBtn name="print" />
        <ToolBtn name="preview" />
        <ToolBtn name="publish" />
        <ToolBtn name="plot" />
        <Sep />
        <ToolBtn name="cut" />
        <ToolBtn name="copy" />
        <ToolBtn name="paste" />
        <ToolBtn name="match" />
        <ToolBtn name="brush" />
        <Sep />
        <ToolBtn name="undo" />
        <ToolBtn name="redo" />
        <Sep />
        <ToolBtn name="hand" />
        <ToolBtn name="clockZoom" />
        <Sep />
        <ToolBtn name="zoomWin" />
        <ToolBtn name="zoomPrev" />
        <ToolBtn name="zoomAll" />
        <Sep />
        <ToolBtn name="dist" />
        <ToolBtn name="ruler" />
        <Sep />
        <ToolBtn name="help" />
      </div>

      <div className="h-[24px] w-[1153px] flex items-center shrink-0 bg-linear-to-b from-[#a6aab1] to-[#d3d5d7]">
        <Grip />
        <ToolBtn name="layers" />
        <Sep />
        <ToolBtn name="dimPick" />
        <ToolBtn name="dimLine" />
        <ToolBtn name="noSym" />
        <ToolBtn name="dimDash" />
        <ToolBtn name="dimMid" />
        <Sep />
        <ToolBtn name="addA" />
        <ToolBtn name="subA" />
        <Sep />
        <ToolBtn name="xlsOut" />
        <ToolBtn name="xlsIn" />
        <ToolBtn name="tableBolt" />
        <Grip />
        <ToolBtn name="clip" active />
        <Sep />
        <ToolBtn name="findBolt" />
        <Sep w="w-[9px]" />
        <div className="h-[20px] w-[364px] ml-[1px] bg-white flex items-center pl-[4px] gap-[2px] text-[12px] shrink-0">
          <LayerGlyphs />
          <span>0</span>
        </div>
        <div className="w-[6px] shrink-0" />
        <div className="h-[20px] w-[145px] bg-white flex items-center pl-[4px] gap-[2px] text-[12px] tracking-[0.35px] shrink-0">
          <Swatch />
          <span>By Layer</span>
        </div>
        <div className="w-[6px] shrink-0" />
        <div className="h-[20px] w-[143px] bg-white flex items-center pl-[6px] gap-[3px] text-[12px] tracking-[0.35px] shrink-0">
          <LinePreview />
          <span>By Layer</span>
        </div>
        <div className="w-[6px] shrink-0" />
        <div className="h-[20px] w-[145px] bg-white flex items-center pl-[6px] gap-[3px] text-[12px] tracking-[0.35px] shrink-0">
          <LinePreview />
          <span>By Layer</span>
        </div>
      </div>

      <div className="h-[802px] flex shrink-0">
        <LeftToolbar />
        <Inspector />
        <DrawingFrame />
      </div>

      <CommandPanel />

      <div className="absolute left-[1536px] top-[873px] italic font-bold text-[68px] leading-[72px] text-white [-webkit-text-stroke:7px_#000] [paint-order:stroke_fill] whitespace-nowrap -skew-x-[8deg]">
        <span className="tracking-[-5px]">6061</span>
        <span className="ml-[28px] tracking-[-2px]">Craft</span>
      </div>
    </div>
  );
}
